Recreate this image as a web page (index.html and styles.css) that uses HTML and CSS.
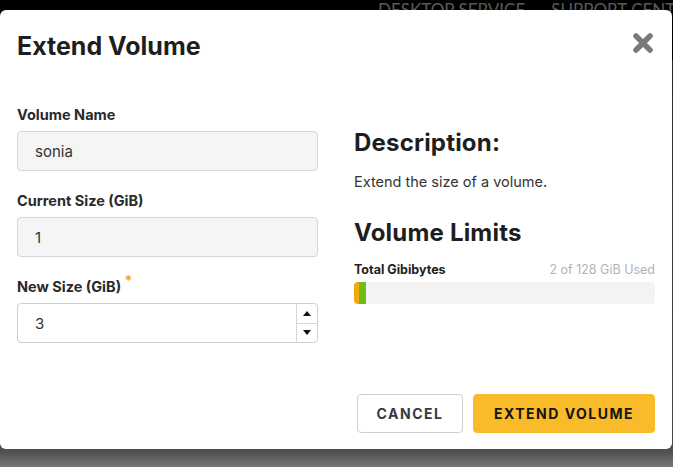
FILE: index.html
```html
<!DOCTYPE html>
<html lang="en">
<head>
<meta charset="utf-8">
<title>Extend Volume</title>
<link rel="stylesheet" href="styles.css">
</head>
<body>
<div class="page">
  <header class="topbar">
    <nav class="nav">
      <a class="nav-link">DESKTOP SERVICE</a>
      <a class="nav-link">SUPPORT CENTER</a>
    </nav>
  </header>
  <div class="backdrop"></div>
</div>

<div class="modal">
  <div class="modal-header">
    <h1 class="modal-title">Extend Volume</h1>
    <button class="close" aria-label="Close">
      <svg width="22" height="22" viewBox="0 0 22 22"><path d="M4 4L18 18M18 4L4 18" stroke="#7a7a7a" stroke-width="5.5" stroke-linecap="round"/></svg>
    </button>
  </div>
  <div class="modal-body">
    <div class="form-col">
      <div class="field">
        <label class="label">Volume Name</label>
        <div class="input readonly">sonia</div>
      </div>
      <div class="field">
        <label class="label">Current Size (GiB)</label>
        <div class="input readonly">1</div>
      </div>
      <div class="field">
        <label class="label">New Size (GiB) <span class="req">*</span></label>
        <div class="input number">
          <span class="value">3</span>
          <span class="spinner">
            <span class="spin"><svg width="8" height="5" viewBox="0 0 8 5"><path d="M0 5L4 0L8 5Z" fill="#111"/></svg></span>
            <span class="spin"><svg width="8" height="5" viewBox="0 0 8 5"><path d="M0 0L4 5L8 0Z" fill="#111"/></svg></span>
          </span>
        </div>
      </div>
    </div>
    <div class="info-col">
      <h2 class="heading">Description:</h2>
      <p class="desc">Extend the size of a volume.</p>
      <h2 class="heading limits">Volume Limits</h2>
      <div class="quota-head">
        <span class="quota-name">Total Gibibytes</span>
        <span class="quota-used">2 of 128 GiB Used</span>
      </div>
      <div class="bar">
        <span class="seg orange"></span><span class="seg green"></span>
      </div>
    </div>
  </div>
  <div class="modal-footer">
    <button class="btn btn-default">CANCEL</button>
    <button class="btn btn-primary">EXTEND VOLUME</button>
  </div>
</div>
</body>
</html>
```

FILE: styles.css
```css
* { box-sizing: border-box; }
html, body { margin: 0; padding: 0; }
body {
  width: 673px;
  height: 467px;
  overflow: hidden;
  font-family: "Inter", "Lato", sans-serif;
  color: #222;
  position: relative;
  background: #000;
}
.page { height: 467px; display: flex; flex-direction: column; }
.topbar { background: #000; height: 60px; }
.nav { display: flex; gap: 26px; padding-left: 378px; padding-top: 0; }
.nav-link {
  color: #5a5a5a;
  font-size: 17px;
  line-height: 20px;
  white-space: nowrap;
  font-family: "Lato", sans-serif;
}
.backdrop {
  flex: 1;
  background: linear-gradient(to bottom, #2a2a2a 0, #4a4a4a 380px, #505050 392px, #787878 407px);
}

.modal {
  position: absolute;
  left: 0;
  top: 10px;
  width: 672px;
  height: 439px;
  background: #fff;
  border-radius: 6px;
  display: flex;
  flex-direction: column;
}
.modal-header {
  display: flex;
  justify-content: space-between;
  align-items: flex-start;
  padding: 21px 18px 0 17px;
}
.modal-title {
  margin: 0;
  font-size: 25px;
  line-height: 30px;
  font-weight: 700;
  color: #1e1e1e;
}
.close {
  border: 0;
  background: none;
  padding: 0;
  margin-top: 1px;
  width: 22px;
  height: 22px;
  cursor: pointer;
}
.close svg { display: block; }

.modal-body {
  display: grid;
  grid-template-columns: 301px 301px;
  column-gap: 36px;
  padding: 44px 17px 0 17px;
}
.field { margin-bottom: 20px; }
.label {
  display: block;
  font-size: 14.5px;
  line-height: 20px;
  font-weight: 700;
  color: #2a2a2a;
  margin-bottom: 6px;
}
.req {
  color: #f5a623;
  font-size: 14px;
  vertical-align: 6px;
  line-height: 0;
}
.input {
  height: 40px;
  border: 1px solid #d6d6d6;
  border-radius: 4px;
  padding: 0 17px;
  display: flex;
  align-items: center;
  font-size: 15px;
  color: #333;
  background: #fff;
}
.input.readonly { background: #f5f5f5; }
.input.number { padding-right: 0; justify-content: space-between; border-color: #cfcfcf; }
.spinner {
  width: 21px;
  height: 100%;
  border-left: 1px solid #d6d6d6;
  display: flex;
  flex-direction: column;
}
.spin {
  flex: 1;
  display: flex;
  align-items: center;
  justify-content: center;
}
.spin + .spin { border-top: 1px solid #d6d6d6; }
.spin svg { display: block; }

.info-col { padding-top: 23px; }
.heading {
  margin: 0;
  font-size: 24px;
  line-height: 30px;
  font-weight: 700;
  color: #1e1e1e;
  letter-spacing: 0.2px;
}
.desc {
  margin: 14px 0 0;
  font-size: 14.5px;
  line-height: 20px;
  color: #333;
}
.limits { margin-top: 26px; }
.quota-head {
  display: flex;
  justify-content: space-between;
  align-items: baseline;
  margin-top: 14px;
  font-size: 12.5px;
  line-height: 16px;
}
.quota-name { font-weight: 700; color: #222; }
.quota-used { color: #b3b3b3; }
.bar {
  margin-top: 4px;
  height: 22px;
  background: #f3f3f3;
  border-radius: 4px;
  display: flex;
  overflow: hidden;
}
.seg { display: block; height: 100%; }
.seg.orange { width: 5px; background: #f5a70e; }
.seg.green { width: 7px; background: #6cbf12; }

.modal-footer {
  margin-top: auto;
  display: flex;
  justify-content: flex-end;
  gap: 10px;
  padding: 0 17px 16px;
}
.btn {
  height: 39px;
  border-radius: 4px;
  font-family: "Inter", sans-serif;
  font-size: 14px;
  font-weight: 700;
  letter-spacing: 1.5px;
  padding: 0;
  cursor: pointer;
}
.btn-default {
  width: 106px;
  background: #fff;
  border: 1px solid #cfcfcf;
  color: #3a3a3a;
}
.btn-primary {
  width: 182px;
  background: #f9bb29;
  border: 1px solid #f9bb29;
  color: #141414;
}
```
